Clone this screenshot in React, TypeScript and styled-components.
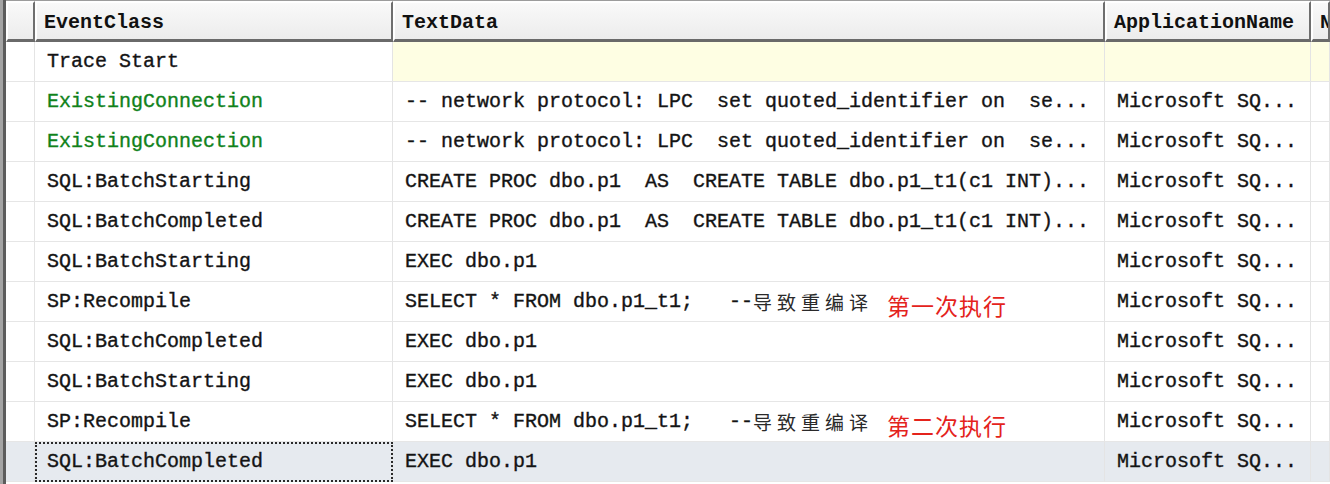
import React from "react";
import styled, { createGlobalStyle, css } from "styled-components";

const GlobalStyle = createGlobalStyle`
  html, body { margin: 0; padding: 0; background: #ffffff; overflow: hidden; }
  body { font-family: "Liberation Mono", "Noto Sans CJK SC", monospace; }
`;

const COLS = "29px 358px 712px 206px 1fr";

const Frame = styled.div`
  width: 1330px;
  height: 484px;
  box-sizing: border-box;
  border-left: 3px solid #a4a4a4;
  background: #ffffff;
  overflow: hidden;
`;

const Table = styled.div`
  display: flex;
  flex-direction: column;
  height: 100%;
  border-left: 3px solid #5c5c5c;
`;

const HeaderRow = styled.div`
  display: grid;
  grid-template-columns: ${COLS};
  height: 42px;
  box-sizing: border-box;
  border-top: 1px solid #9c9c9c;
`;

const HeaderCell = styled.div`
  box-sizing: border-box;
  display: flex;
  align-items: center;
  padding: 2px 0 0 7px;
  overflow: hidden;
  white-space: nowrap;
  background: linear-gradient(#f9f9f9, #ececec);
  border-top: 2px solid #ffffff;
  border-left: 2px solid #ffffff;
  border-right: 2px solid #6e6e6e;
  border-bottom: 3px solid #6a6a6a;
  font-family: "Liberation Mono", monospace;
  font-weight: bold;
  font-size: 20px;
  color: #111111;
`;

const Row = styled.div<{ $selected?: boolean }>`
  display: grid;
  grid-template-columns: ${COLS};
  height: 40px;
  background: ${(p) => (p.$selected ? "#e6eaef" : "#ffffff")};
`;

const Cell = styled.div<{ $yellow?: boolean; $green?: boolean; $focus?: boolean }>`
  box-sizing: border-box;
  display: flex;
  align-items: center;
  padding-left: 12px;
  overflow: hidden;
  white-space: pre;
  border-right: 1px solid #e4e4e4;
  border-bottom: 1px solid #e6e6e6;
  font-family: "Liberation Mono", "Noto Sans CJK SC", monospace;
  font-size: 20px;
  -webkit-text-stroke: 0.35px currentColor;
  color: ${(p) => (p.$green ? "#10821a" : "#141414")};
  background: ${(p) => (p.$yellow ? "#fefee3" : "transparent")};
  ${(p) =>
    p.$focus &&
    css`
      outline: 2px dotted #2a2a2a;
      outline-offset: -2px;
    `}
`;

const RowHead = styled.div`
  box-sizing: border-box;
  border-right: 1px solid #e4e4e4;
  border-bottom: 1px solid #e6e6e6;
`;

const Cjk = styled.span`
  font-family: "Noto Sans CJK SC", sans-serif;
  font-size: 19px;
  letter-spacing: 5px;
  color: #2a2a2a;
  -webkit-text-stroke: 0;
`;

const Note = styled.span`
  font-family: "Noto Sans CJK SC", sans-serif;
  font-size: 23px;
  letter-spacing: 1px;
  color: #e4231c;
  margin-left: 14px;
  position: relative;
  top: 3px;
  -webkit-text-stroke: 0;
`;

type Data = {
  ev: string;
  green?: boolean;
  text?: React.ReactNode;
  app?: string;
  yellow?: boolean;
  selected?: boolean;
};

const recompile = (note: string) => (
  <>
    {"SELECT * FROM dbo.p1_t1;   --"}
    <Cjk>导致重编译</Cjk>
    <Note>{note}</Note>
  </>
);

const MS = "Microsoft SQ...";

const rows: Data[] = [
  { ev: "Trace Start", yellow: true },
  { ev: "ExistingConnection", green: true, text: "-- network protocol: LPC  set quoted_identifier on  se...", app: MS },
  { ev: "ExistingConnection", green: true, text: "-- network protocol: LPC  set quoted_identifier on  se...", app: MS },
  { ev: "SQL:BatchStarting", text: "CREATE PROC dbo.p1  AS  CREATE TABLE dbo.p1_t1(c1 INT)...", app: MS },
  { ev: "SQL:BatchCompleted", text: "CREATE PROC dbo.p1  AS  CREATE TABLE dbo.p1_t1(c1 INT)...", app: MS },
  { ev: "SQL:BatchStarting", text: "EXEC dbo.p1", app: MS },
  { ev: "SP:Recompile", text: recompile("第一次执行"), app: MS },
  { ev: "SQL:BatchCompleted", text: "EXEC dbo.p1", app: MS },
  { ev: "SQL:BatchStarting", text: "EXEC dbo.p1", app: MS },
  { ev: "SP:Recompile", text: recompile("第二次执行"), app: MS },
  { ev: "SQL:BatchCompleted", text: "EXEC dbo.p1", app: MS, selected: true },
];

export default function App() {
  return (
    <>
      <GlobalStyle />
      <Frame>
        <Table>
          <HeaderRow>
            <HeaderCell />
            <HeaderCell>EventClass</HeaderCell>
            <HeaderCell>TextData</HeaderCell>
            <HeaderCell>ApplicationName</HeaderCell>
            <HeaderCell>NTUserName</HeaderCell>
          </HeaderRow>
          {rows.map((r, i) => (
            <Row key={i} $selected={r.selected}>
              <RowHead />
              <Cell $green={r.green} $focus={r.selected}>
                {r.ev}
              </Cell>
              <Cell $yellow={r.yellow}>{r.text}</Cell>
              <Cell $yellow={r.yellow}>{r.app}</Cell>
              <Cell $yellow={r.yellow} />
            </Row>
          ))}
        </Table>
      </Frame>
    </>
  );
}
